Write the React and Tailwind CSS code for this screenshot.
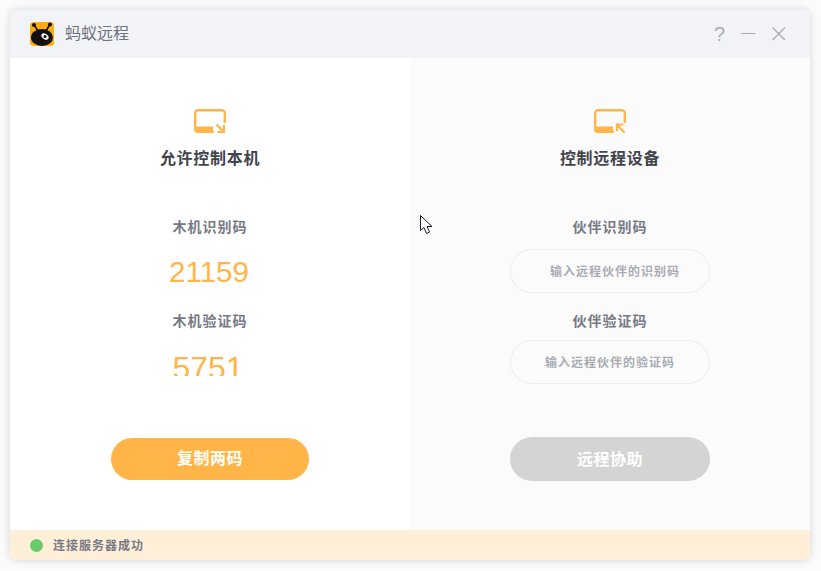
import React from "react";

const cjk = "font-['Liberation_Sans','Noto_Sans_CJK_SC',sans-serif]";

function ScreenIcon({ incoming }) {
  return (
    <svg width="34" height="26" viewBox="0 0 34 26" fill="none" className="block">
      <path d="M20 22.800H5A2.800 2.800 0 0 1 2.200 20V4A2.800 2.800 0 0 1 5 1.200H29A2.800 2.800 0 0 1 31.800 4V13" stroke="#FFB547" strokeWidth="2.400" strokeLinecap="round" />
      <path d="M2 17.500H20V24H5.500A3.500 3.500 0 0 1 2 20.500Z" fill="#FFB547" />
      {incoming ? (
        <path d="M31.500 23.500L24.500 16.500M24 22V15.500H30.500" stroke="#FFB547" strokeWidth="2.200" />
      ) : (
        <path d="M23.500 15.500L30.500 22.500M31 16V23H24.500" stroke="#FFB547" strokeWidth="2.200" />
      )}
    </svg>
  );
}

function Logo() {
  return (
    <svg width="24" height="24" viewBox="0 0 24 24" className="block">
      <rect width="24" height="24" rx="4" fill="#FFAA0D" />
      <circle cx="4" cy="3" r="2" fill="#111" />
      <circle cx="20" cy="2.500" r="2" fill="#111" />
      <path d="M4.500 3.500L8 9M19.500 3L16 9" stroke="#111" strokeWidth="1.500" />
      <ellipse cx="12" cy="15.500" rx="11" ry="8.500" fill="#111" />
      <ellipse cx="15" cy="14.500" rx="4" ry="2.600" transform="rotate(35 15 14.500)" fill="#fff" />
      <circle cx="15" cy="14.500" r="1.500" fill="#111" />
    </svg>
  );
}

function Pill({ text, pl, mt }) {
  return (
    <div className={`w-[200px] h-[44px] rounded-full border border-[#ececee] flex items-center pt-[2px] text-[12px] tracking-[1px] font-bold text-[#a9abb3] ${pl} ${mt}`}>
      {text}
    </div>
  );
}

const label = "text-[14px] tracking-[1px] font-bold leading-[24px] text-[#777a85]";
const heading = "mt-[12px] text-[16px] tracking-[0.7px] font-bold leading-[24px] text-[#41434d]";

export default function App() {
  return (
    <div className={`relative w-[821px] h-[571px] bg-[#fbfbfb] p-[10px] pb-[11px] pr-[11px] ${cjk}`}>
      <div className="relative w-[800px] h-[550px] rounded-[7px] overflow-hidden bg-white flex flex-col shadow-[0_0_8px_rgba(0,0,0,0.16)]">
        <div className="h-[48px] shrink-0 bg-[#f2f3f7] flex items-center pl-[20px] pr-[24px]">
          <Logo />
          <span className="ml-[11px] text-[16px] text-[#6f7380]">蚂蚁远程</span>
          <div className="ml-auto flex items-center text-[#a7abb5]">
            <span className="text-[20px] leading-none">?</span>
            <svg width="16" height="16" viewBox="0 0 16 16" className="ml-[15px]"><path d="M1 7.500H15.500" stroke="#a7abb5" strokeWidth="1" /></svg>
            <svg width="16" height="16" viewBox="0 0 16 16" className="ml-[14px]"><path d="M2.500 1.500L15 14M15 1.500L2.500 14" stroke="#a7abb5" strokeWidth="1.300" /></svg>
          </div>
        </div>

        <div className="flex flex-1 min-h-0">
          <div className="w-[400px] flex flex-col items-center pt-[51px]">
            <ScreenIcon />
            <div className={heading}>允许控制本机</div>
            <div className={`mt-[44px] ${label}`}>木机识别码</div>
            <div className="mt-[15px] text-[29.500px] leading-[36px] text-[#FFB547] -translate-x-[1px]">21159</div>
            <div className={`mt-[19px] ${label}`}>木机验证码</div>
            <div className="mt-[17px] h-[26px] overflow-hidden text-[32px] leading-[36px] text-[#FFB547] -translate-x-[2px]">5751</div>
            <div className="mt-[62px] w-[198px] h-[42px] rounded-full bg-[#FFB547] flex items-center justify-center text-[16px] tracking-[0.5px] font-bold text-white">复制两码</div>
          </div>

          <div className="flex-1 bg-[#fbfbfc] flex flex-col items-center pt-[51px]">
            <ScreenIcon incoming />
            <div className={heading}>控制远程设备</div>
            <div className={`mt-[44px] ${label}`}>伙伴识别码</div>
            <Pill text="输入远程伙伴的识别码" pl="pl-[39px]" mt="mt-[10px]" />
            <div className={`mt-[16px] ${label}`}>伙伴验证码</div>
            <Pill text="输入远程伙伴的验证码" pl="pl-[34px]" mt="mt-[7px]" />
            <div className="mt-[53px] w-[200px] h-[44px] rounded-full bg-[#d4d4d4] flex items-center justify-center pt-[1px] text-[16px] tracking-[0.5px] font-bold text-white">远程协助</div>
          </div>
        </div>

        <div className="h-[30px] shrink-0 bg-[#ffefd9] flex items-center pl-[20px]">
          <span className="w-[13px] h-[13px] rounded-full bg-[#66cc6a]" />
          <span className="ml-[10px] pt-[2px] text-[12px] tracking-[1px] font-bold text-[#777a85]">连接服务器成功</span>
        </div>
      </div>

      <svg width="14" height="20" viewBox="0 0 14 20" className="absolute left-[420px] top-[215px]">
        <path d="M0.500 0.500V15.500L4 12.500L6.500 18.500L9.500 17L7 11.500H12Z" fill="#fff" stroke="#1a1d33" strokeWidth="1" />
      </svg>
    </div>
  );
}
